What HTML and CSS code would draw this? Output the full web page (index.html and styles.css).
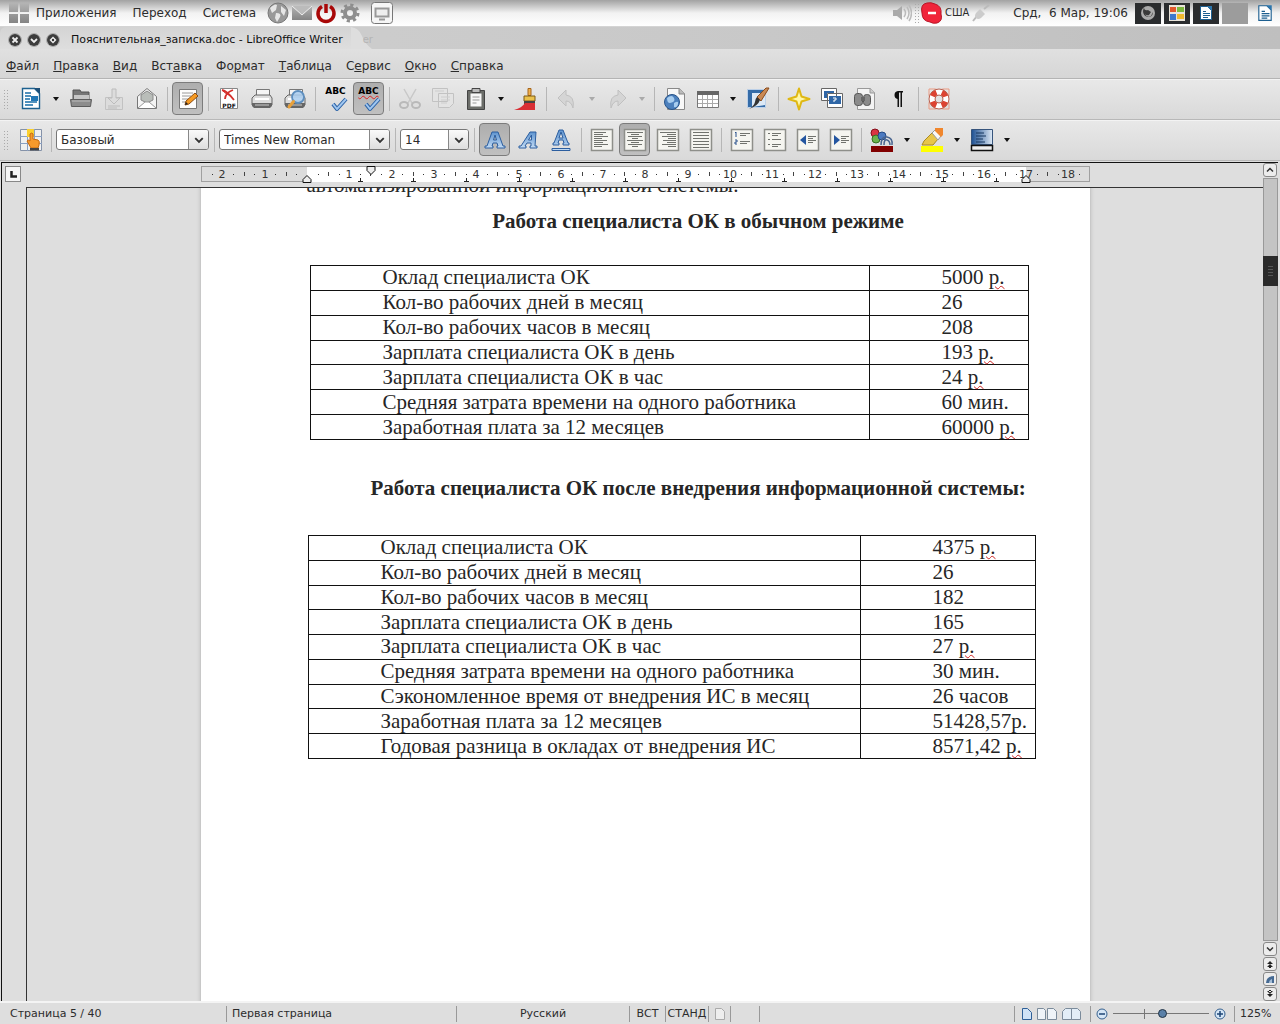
FILE: index.html
```html
<!DOCTYPE html>
<html lang="ru">
<head>
<meta charset="utf-8">
<title>Пояснительная_записка.doc - LibreOffice Writer</title>
<link rel="stylesheet" href="styles.css">
</head>
<body>
<svg class="defs" aria-hidden="true">
  <defs>
    <linearGradient id="blue" x1="0" y1="0" x2="0" y2="1"><stop offset="0" stop-color="#5d93cf"/><stop offset="1" stop-color="#c4dcf5"/></linearGradient>
    <linearGradient id="grey" x1="0" y1="0" x2="0" y2="1"><stop offset="0" stop-color="#b4b4b4"/><stop offset="1" stop-color="#848484"/></linearGradient>
    <linearGradient id="shade"><stop offset="0" stop-color="#1c4f91"/><stop offset="1" stop-color="#dfeaf6"/></linearGradient>
  </defs>
  <symbol id="doc" viewBox="0 0 24 24"><path d="M3.500 1.500h12l5 5v15h-17z" fill="#fff" stroke="#1d618f" stroke-width="1.400"/><path d="M15 1h6v6z" fill="#1d4f78"/><path d="M6 6h6M6 9h6M6 12h5M6 15h12M6 18h8" stroke="#176da8" stroke-width="1.500"/><path d="M12 9h7v5h-7z" fill="#2277b5"/></symbol>
  <symbol id="folder" viewBox="0 0 24 24"><path d="M4 3h7l1 2h8v8H4z" fill="#777" stroke="#555"/><path d="M5 8h15v5H5z" fill="#c6c6c6"/><path d="M1.500 12.500h21l-1 7h-19z" fill="#8c8c8c" stroke="#5c5c5c"/><path d="M3 14h18" stroke="#bbb"/></symbol>
  <symbol id="save" viewBox="0 0 24 24"><path d="M3.500 10.500h17v12h-17z" fill="#dcdcdc" stroke="#c2c2c2"/><path d="M10 2h4v9h4l-6 6-6-6h4z" fill="#dcdcdc" stroke="#bcbcbc"/><path d="M6 19h12M6 21h9" stroke="#bcbcbc"/></symbol>
  <symbol id="mail" viewBox="0 0 24 24"><path d="M2.500 9.500l9.500-8 9.500 8v12h-19z" fill="#f4f4f4" stroke="#777"/><path d="M6 8l6-4 6 4v5l-6 3-6-3z" fill="#b9bdb9" stroke="#888"/><path d="M3 21l7-6h4l7 6" fill="#fff" stroke="#999"/></symbol>
  <symbol id="edit" viewBox="0 0 24 24"><path d="M3.500 2.500h17v19h-17z" fill="#fdfdfd" stroke="#777"/><path d="M6 6h11M6 9h9M6 12h7M6 15h4" stroke="#9a9a9a"/><path d="M19 6l3 3-9 8-4 1 1-4z" fill="#f59a22" stroke="#8c4a10"/><path d="M9 18l1-3 2 2z" fill="#222"/></symbol>
  <symbol id="pdf" viewBox="0 0 24 24"><path d="M3.500 1.500h17v20h-17z" fill="#fff" stroke="#888"/><path d="M5 3q5 1 12 10M8 12q0-6 8-9" stroke="#d4302c" stroke-width="1.800" fill="none"/><path d="M5 3q2 3 7 5" stroke="#d4302c" fill="none"/><text x="12" y="20.500" class="pdf-label">PDF</text></symbol>
  <symbol id="print" viewBox="0 0 24 24"><path d="M6.500 10V2.500h13V10" fill="#f5f5f5" stroke="#777"/><path d="M2 11l3-3h15l2 3v7H2z" fill="#ddd" stroke="#666"/><path d="M5 12h14" stroke="#fff" stroke-width="2"/><path d="M2 16h20v3l-2 2H4l-2-2z" fill="#666"/><path d="M5 18h14" stroke="#ccc"/></symbol>
  <symbol id="lens" viewBox="0 0 24 24"><circle cx="15" cy="10" r="6" fill="#a9ccee" fill-opacity=".85" stroke="#5e8fbf" stroke-width="1.800"/><path d="M10.500 14.500L6 20" stroke="#e9a13b" stroke-width="3" stroke-linecap="round"/></symbol>
  <symbol id="tick" viewBox="0 0 24 24"><path d="M9 17l4 5 9-10" fill="none" stroke="#2c62a5" stroke-width="4" stroke-linejoin="round"/><path d="M9 17l4 5 9-10" fill="none" stroke="#9fc6f0" stroke-width="2"/></symbol>
  <symbol id="cut" viewBox="0 0 24 24"><path d="M6 2l8 14M18 2l-8 14" stroke="#c8c8c8" stroke-width="1.500"/><ellipse cx="6" cy="18" rx="4" ry="3" fill="none" stroke="#b9b9b9" stroke-width="2"/><ellipse cx="18" cy="18" rx="4" ry="3" fill="none" stroke="#b9b9b9" stroke-width="2"/></symbol>
  <symbol id="copy" viewBox="0 0 24 24"><path d="M1.500 1.500h15v13h-15zM7.500 6.500h15v10l-4 4h-11z" fill="#e3e3e3" stroke="#c2c2c2"/><path d="M4 4h9M10 10h9M10 13h9M10 16h6" stroke="#cdcdcd"/></symbol>
  <symbol id="paste" viewBox="0 0 24 24"><path d="M3.500 3.500h17v19h-17z" fill="#6b6d69" stroke="#444"/><path d="M6.500 6.500h11v13h-11z" fill="#f7f7f7"/><path d="M8 1.500h8v4H8z" fill="#bbb" stroke="#444"/><path d="M8.500 10h7M8.500 13h7M8.500 16h4" stroke="#999"/></symbol>
  <symbol id="brush" viewBox="0 0 24 24"><path d="M14 1.500h3v7h-3z" fill="#f0b04d" stroke="#a6651b"/><path d="M10 9h11v5H10z" fill="#eac14c" stroke="#7c5b16"/><path d="M10 14h11v3H10z" fill="#444"/><path d="M11 16h10v7H0q8-2 11-7z" fill="#d92f35"/></symbol>
  <symbol id="undo" viewBox="0 0 24 24"><path d="M11 3v5q9 1 7 13-2-7-7-7v5L3 11z" fill="#d5d5d5" stroke="#c0c0c0"/></symbol>
  <symbol id="globe" viewBox="0 0 24 24"><path d="M4.500 1.500h12l5 5v16h-17z" fill="#f8f8f8" stroke="#888"/><path d="M16 1v6h6" fill="#bbb" stroke="#888"/><circle cx="9" cy="15" r="7.500" fill="#4c80bd" stroke="#28548a"/><path d="M4 11q5-4 7 0t-4 5q-3 0-3-5zM11 16q5-3 4 1t-4 3z" fill="#a8cdef"/></symbol>
  <symbol id="table" viewBox="0 0 24 24"><path d="M1.500 4.500h21v16h-21z" fill="#fff" stroke="#777"/><path d="M1 4h22v4H1z" fill="#666"/><path d="M2 12.500h20M2 16.500h20M6.500 8v12M11.500 8v12M16.500 8v12" stroke="#aaa"/></symbol>
  <symbol id="draw" viewBox="0 0 24 24"><path d="M1.500 2.500h18v18h-18z" fill="#356ca8" stroke="#bcd0e8"/><path d="M6 6h13v12l-13 2z" fill="#dce9f6"/><path d="M23 1l-8 13-4-4L20 1z" fill="#c98954" stroke="#8a4c1c"/><path d="M14 13q-2 6-11 9 5-3 6-7 0-3 2-5z" fill="#333"/></symbol>
  <symbol id="star" viewBox="0 0 24 24"><path d="M12 1.500l2.500 8 8 2.500-8 2.500-2.500 8-2.500-8-8-2.500 8-2.500z" fill="#fff8a8" stroke="#dfb813" stroke-width="2" stroke-linejoin="round"/></symbol>
  <symbol id="gallery" viewBox="0 0 24 24"><path d="M1.500 1.500h15v12h-15zM7.500 6.500h15v14h-15z" fill="#fff" stroke="#666"/><path d="M4 4h10v2H7v5H4zM9 9h12v8H9z" fill="#2f66a6"/><path d="M13 11h3v2h-2v2" stroke="#fff" fill="none"/></symbol>
  <symbol id="find" viewBox="0 0 24 24"><path d="M4.500 1.500h13l4 4v17h-17z" fill="#f4f4f4" stroke="#999"/><path d="M17 1v5h5" fill="#ccc" stroke="#999"/><rect x="1.500" y="6.500" width="8" height="12" rx="3" fill="#8b8b8b" stroke="#555"/><rect x="10.500" y="7.500" width="7" height="11" rx="3" fill="#8b8b8b" stroke="#555"/><path d="M8 10h4v4H8z" fill="#666"/></symbol>
  <symbol id="pilcrow" viewBox="0 0 24 24"><path d="M12 4h5v1.500h-1V20h-1.500V5.500H13V20h-1.500v-8q-3-.5-3-4t3.500-4z" fill="#111"/></symbol>
  <symbol id="help" viewBox="0 0 24 24"><path d="M2 2h6l4 1 4-1h6v6l-1 4 1 4v6h-6l-4-1-4 1H2v-6l1-4-1-4z" fill="none" stroke="#eb9b83" stroke-width="1"/><circle cx="12" cy="12" r="7" fill="none" stroke="#fff" stroke-width="6"/><circle cx="12" cy="12" r="7" fill="none" stroke="#dd4331" stroke-width="6" stroke-dasharray="5.500 5.500" stroke-dashoffset="-2.700"/><circle cx="12" cy="12" r="10" fill="none" stroke="#b96150"/><circle cx="12" cy="12" r="4" fill="#e2e2e2" stroke="#b96150"/></symbol>
  <symbol id="hand" viewBox="0 0 24 24"><path d="M1.500 1.500h21v21h-21z" fill="#f0f0f0" stroke="#8592a8"/><path d="M1 8.500h22M1 15.500h22M8.500 1v22M15.500 1v22" stroke="#8aa0c2"/><path d="M8 1h7v8H8z" fill="#fbd02f"/><path d="M11 6q2-2 3 0v5l5 1q2 1 1 5l-1 3h-7l-4-7q1-2 3 0z" fill="#f69a2c" stroke="#c56a10"/><path d="M11 20h9v2.500h-9z" fill="#444"/></symbol>
  <symbol id="bold" viewBox="0 0 24 24"><path d="M2 20v-2h2L9 4h6l5 14h2v2h-8v-2h1l-1-3h-4l-1 3h1v2zM10.500 12h3L12 7z" fill="url(#blue)" stroke="#2c5e9f" fill-rule="evenodd"/></symbol>
  <symbol id="italic" viewBox="0 0 24 24"><path d="M3 20v-2h2L14 4h6l-1 14h2v2h-7v-2h1v-3h-4l-2 3h1v2zM12.500 12h3V7z" fill="url(#blue)" stroke="#2c5e9f" fill-rule="evenodd"/></symbol>
  <symbol id="under" viewBox="0 0 24 24"><path d="M4 17v-2h1L10 2h4l5 13h1v2h-6v-2h1l-1-3h-4l-1 3h1v2zM10 10h4l-2-6zM3 20.500h18v2H3z" fill="url(#blue)" stroke="#2c5e9f" fill-rule="evenodd"/></symbol>
  <symbol id="sheet" viewBox="0 0 24 24"><path d="M1.500 1.500h21v21h-21z" fill="#f5f5f0" stroke="#8e8f8a" stroke-width="1.500"/></symbol>
  <symbol id="color" viewBox="0 0 24 24"><path d="M1 18h22v6H1z" fill="#810000"/><circle cx="5" cy="5" r="4" fill="#d93443" stroke="#84101c"/><circle cx="6" cy="11" r="4" fill="#6cb44e" stroke="#36701f"/><circle cx="12" cy="8" r="4" fill="#4c7ac0" stroke="#234a86"/><path d="M11 17q0-9 6-8t5 8M14 17q0-6 3-5t3 5" fill="none" stroke="#49658f" stroke-width="1.500"/></symbol>
  <symbol id="mark" viewBox="0 0 24 24"><path d="M1 18h22v6H1z" fill="#ff0"/><path d="M4 13l8-8 6 6-5 6H2z" fill="#e8c64a" stroke="#ab8a20"/><path d="M12 5l3-3 6 6-3 4z" fill="#f8f8f8" stroke="#999"/><path d="M15 0h8v7l-2 2-6-6z" fill="#f0862d"/></symbol>
  <symbol id="back" viewBox="0 0 24 24"><path d="M1.500 1.500h21v15h-21z" fill="url(#shade)" stroke="#36547c"/><path d="M6 5h8M6 8h10M6 11h7M6 14h9" stroke="#16365f"/><path d="M1.500 17.500h21v5h-21z" fill="#eee" stroke="#111" stroke-width="1.500"/></symbol>
  <symbol id="drop" viewBox="0 0 8 8"><path d="M1 2h6L4 6z" fill="currentColor"/></symbol>
  <symbol id="chev" viewBox="0 0 8 8"><path d="M1 2.500l3 3 3-3" fill="none" stroke="#333" stroke-width="1.500"/></symbol>
  <symbol id="smalldoc" viewBox="0 0 16 16"><path d="M2.500 1.500h7l4 4v9h-11z" fill="#fff" stroke="#1d5f90"/><path d="M9 1h5v5z" fill="#2d76ac"/><path d="M5 6.500h3M5 8.500h7M5 10.500h7M5 12.500h5" stroke="#1d5f90"/></symbol>
</svg>

<header class="panel">
  <svg class="apps" viewBox="0 0 20 20"><path d="M0 0h9v9H0zM11 0h9v9h-9zM0 11h9v9H0zM11 11h9v9h-9z" fill="url(#grey)"/></svg>
  <nav class="panel-menu"><a href="#">Приложения</a><a href="#">Переход</a><a href="#">Система</a></nav>
  <div class="launchers">
    <svg viewBox="0 0 22 22"><circle cx="11" cy="11" r="10" fill="#999" stroke="#777"/><path d="M3 6q5-5 7-3l-1 5-4 3zM9 11q6 0 4 4l-3 5-2-4zM14 4l5 4-2 6-3-4z" fill="#e6e6e6"/></svg>
    <svg viewBox="0 0 22 22"><path d="M1 4h20v14H1z" fill="url(#grey)"/><path d="M1 4l10 9 10-9" fill="#bbb" stroke="#eee"/></svg>
    <svg viewBox="0 0 22 22"><path d="M7 4.500a8 8 0 1 0 8 0M11 2v9" fill="none" stroke="#a90808" stroke-width="3.500"/></svg>
    <svg viewBox="0 0 22 22"><circle cx="11" cy="11" r="5" fill="none" stroke="#8e8e8e" stroke-width="4"/><circle cx="11" cy="11" r="8" fill="none" stroke="#8e8e8e" stroke-width="3" stroke-dasharray="3.140 3.140"/></svg>
    <svg class="screen" viewBox="0 0 22 22"><rect x=".5" y=".5" width="21" height="21" rx="3" fill="#f6f6f6" stroke="#777"/><path d="M4.500 6.500h13v8h-13z" fill="#eee" stroke="#999" stroke-width="2"/><path d="M8 17.500h6" stroke="#999" stroke-width="2"/></svg>
  </div>
  <div class="tray">
    <svg class="i20" viewBox="0 0 20 20"><path d="M1 7h4l5-4v14l-5-4H1z" fill="#aaa"/><path d="M12 6q3 4 0 8M15 4q4 6 0 12M17 2q5 8 0 16" fill="none" stroke="#bbb" stroke-width="1.500"/></svg>
    <span class="grip"></span>
    <svg class="i22" viewBox="0 0 22 22"><path d="M6 1q4-1 8 1 7 2 6 10 2 7-4 9-4 1-7-1-8-1-8-9-2-9 5-10z" fill="#f0243a" stroke="#b71526"/><path d="M7 11h8" stroke="#fff" stroke-width="2.500"/></svg>
    <span class="lang">США</span>
    <svg class="i20" viewBox="0 0 20 20"><path d="M2 18l4-5M18 2l-5 4" stroke="#bbb" stroke-width="2"/><path d="M5 10l4-4 5 5-4 4q-3 2-5 0t0-5z" fill="#ccc"/></svg>
  </div>
  <time class="clock">Срд,&nbsp; 6 Мар, 19:06</time>
  <div class="windows">
    <button aria-label="Браузер"><svg viewBox="0 0 16 16"><circle cx="8" cy="8" r="7" fill="#aaa"/><path d="M4 2q0 4 4 3l3 2-2 3q-2 1-4-1 2 4 6 2l2-4q0 5-5 5-5-1-5-6z" fill="#3a3a3a"/></svg></button>
    <button aria-label="Файлы"><svg viewBox="0 0 16 16"><path d="M0 0h16v16H0z" fill="#e9e4da"/><path d="M1 2h6v5H1z" fill="#e2582c"/><path d="M8 2h7v5H8z" fill="#7cb83c"/><path d="M1 9h6v6H1z" fill="#3e78cc"/><path d="M8 9h7v5H8z" fill="#f0b92d"/></svg></button>
    <button aria-label="Документ"><svg viewBox="0 0 16 16"><use href="#smalldoc"/></svg></button>
    <button class="blank" aria-label="Пустое"></button>
  </div>
  <svg class="i18" viewBox="0 0 16 16"><use href="#smalldoc"/></svg>
</header>

<main class="window">
  <div class="titlebar">
    <div class="tab">
      <button aria-label="Закрыть"><svg viewBox="0 0 12 12"><circle cx="6" cy="6" r="6" fill="#3c3c3c"/><path d="M3.500 3.500l5 5M8.500 3.500l-5 5" stroke="#eee" stroke-width="1.800"/></svg></button>
      <button aria-label="Свернуть"><svg viewBox="0 0 12 12"><circle cx="6" cy="6" r="6" fill="#3c3c3c"/><path d="M3 5l3 3 3-3" fill="none" stroke="#eee" stroke-width="1.800"/></svg></button>
      <button aria-label="Развернуть"><svg viewBox="0 0 12 12"><circle cx="6" cy="6" r="6" fill="#3c3c3c"/><path d="M6 2.500L9.500 6 6 9.500 2.500 6z" fill="#eee"/><circle cx="6" cy="6" r="1.200" fill="#333"/></svg></button>
      <h1>Пояснительная_записка.doc - LibreOffice Writer</h1>
    </div>
    <svg class="tab-end" viewBox="0 0 24 22"><path d="M0 0q8 1 11 9t10 13H0z" fill="#dedede"/></svg>
    <span class="ghost">er</span>
  </div>
  <nav class="menubar">
    <a href="#"><u>Ф</u>айл</a><a href="#"><u>П</u>равка</a><a href="#"><u>В</u>ид</a><a href="#">Вст<u>а</u>вка</a><a href="#">Фо<u>р</u>мат</a><a href="#"><u>Т</u>аблица</a><a href="#">С<u>е</u>рвис</a><a href="#"><u>О</u>кно</a><a href="#"><u>С</u>правка</a>
  </nav>

  <div class="toolbar" role="toolbar" aria-label="Стандартная">
    <span class="grip"></span>
    <button aria-label="Создать"><svg><use href="#doc"/></svg></button>
    <button class="drop" aria-label="Виды документов"><svg><use href="#drop"/></svg></button>
    <button aria-label="Открыть"><svg><use href="#folder"/></svg></button>
    <button disabled aria-label="Сохранить"><svg><use href="#save"/></svg></button>
    <button aria-label="Отправить"><svg><use href="#mail"/></svg></button>
    <i class="sep"></i>
    <button class="on" aria-label="Правка файла"><svg><use href="#edit"/></svg></button>
    <i class="sep"></i>
    <button aria-label="Экспорт в PDF"><svg><use href="#pdf"/></svg></button>
    <button aria-label="Печать"><svg><use href="#print"/></svg></button>
    <button aria-label="Просмотр"><svg viewBox="0 0 24 24"><use href="#print"/><use href="#lens"/></svg></button>
    <i class="sep"></i>
    <button class="abc"><span>ABC</span><svg><use href="#tick"/></svg></button>
    <button class="abc wavy on"><span>ABC</span><svg><use href="#tick"/></svg></button>
    <i class="sep"></i>
    <button disabled aria-label="Вырезать"><svg><use href="#cut"/></svg></button>
    <button disabled aria-label="Копировать"><svg><use href="#copy"/></svg></button>
    <button aria-label="Вставить"><svg><use href="#paste"/></svg></button>
    <button class="drop" aria-label="Виды вставки"><svg><use href="#drop"/></svg></button>
    <button aria-label="Копировать формат"><svg><use href="#brush"/></svg></button>
    <i class="sep"></i>
    <button disabled aria-label="Отменить"><svg><use href="#undo"/></svg></button>
    <button class="drop" disabled aria-label="Список отмен"><svg><use href="#drop"/></svg></button>
    <button disabled aria-label="Повторить"><svg class="flip"><use href="#undo"/></svg></button>
    <button class="drop" disabled aria-label="Список повторов"><svg><use href="#drop"/></svg></button>
    <i class="sep"></i>
    <button aria-label="Гиперссылка"><svg><use href="#globe"/></svg></button>
    <button aria-label="Таблица"><svg><use href="#table"/></svg></button>
    <button class="drop" aria-label="Размер таблицы"><svg><use href="#drop"/></svg></button>
    <button aria-label="Рисование"><svg><use href="#draw"/></svg></button>
    <i class="sep"></i>
    <button aria-label="Навигатор"><svg><use href="#star"/></svg></button>
    <button aria-label="Галерея"><svg><use href="#gallery"/></svg></button>
    <button aria-label="Найти"><svg><use href="#find"/></svg></button>
    <button aria-label="Непечатаемые символы"><svg><use href="#pilcrow"/></svg></button>
    <i class="sep"></i>
    <button aria-label="Справка"><svg><use href="#help"/></svg></button>
  </div>

  <div class="toolbar" role="toolbar" aria-label="Форматирование">
    <span class="grip"></span>
    <button aria-label="Стили"><svg><use href="#hand"/></svg></button>
    <i class="sep"></i>
    <label class="combo style"><select aria-label="Стиль"><option>Базовый</option></select><span><svg><use href="#chev"/></svg></span></label>
    <i class="sep"></i>
    <label class="combo font"><select aria-label="Шрифт"><option>Times New Roman</option></select><span><svg><use href="#chev"/></svg></span></label>
    <i class="sep"></i>
    <label class="combo size"><select aria-label="Кегль"><option>14</option></select><span><svg><use href="#chev"/></svg></span></label>
    <i class="sep"></i>
    <button class="on" aria-label="Полужирный"><svg><use href="#bold"/></svg></button>
    <button aria-label="Курсив"><svg><use href="#italic"/></svg></button>
    <button aria-label="Подчёркнутый"><svg><use href="#under"/></svg></button>
    <i class="sep"></i>
    <button aria-label="По левому краю"><svg viewBox="0 0 24 24"><use href="#sheet"/><path class="ln" d="M4 4.500h12M4 6.500h9M4 8.500h14M4 10.500h8M4 12.500h13M4 14.500h9M4 16.500h14M4 18.500h8"/></svg></button>
    <button class="on" aria-label="По центру"><svg viewBox="0 0 24 24"><use href="#sheet"/><path class="ln" d="M4 4.500h16M8 6.500h8M5 8.500h14M9 10.500h6M4 12.500h16M8 14.500h8M5 16.500h14M9 18.500h6"/></svg></button>
    <button aria-label="По правому краю"><svg viewBox="0 0 24 24"><use href="#sheet"/><path class="ln" d="M4 4.500h16M11 6.500h9M6 8.500h14M12 10.500h8M7 12.500h13M11 14.500h9M6 16.500h14M12 18.500h8"/></svg></button>
    <button aria-label="По ширине"><svg viewBox="0 0 24 24"><use href="#sheet"/><path class="ln" d="M4 4.500h16M4 7.500h16M4 10.500h16M4 13.500h16M4 16.500h16M4 19.500h16"/></svg></button>
    <i class="sep"></i>
    <button aria-label="Нумерация"><svg viewBox="0 0 24 24"><use href="#sheet"/><path class="ln" d="M10 5.500h10M10 7.500h6M10 13.500h10M10 15.500h7"/><path d="M5 5l1-1v5M5 12h2v2H5v2h2" stroke="#28518c" fill="none"/></svg></button>
    <button aria-label="Маркеры"><svg viewBox="0 0 24 24"><use href="#sheet"/><path class="ln" d="M5 5.500h2M9 5.500h9M9 7.500h6M5 11.500h2M9 11.500h9M5 16.500h2M9 16.500h9M9 18.500h6"/></svg></button>
    <button aria-label="Уменьшить отступ"><svg viewBox="0 0 24 24"><use href="#sheet"/><path d="M10 7v10l-6-5z" fill="#2456a0"/><path class="ln" d="M12 8.500h8M12 10.500h5M12 12.500h8M12 14.500h5"/></svg></button>
    <button aria-label="Увеличить отступ"><svg viewBox="0 0 24 24"><use href="#sheet"/><path d="M5 7v10l6-5z" fill="#2456a0"/><path class="ln" d="M12 8.500h8M12 10.500h5M12 12.500h8M12 14.500h5"/></svg></button>
    <i class="sep"></i>
    <button aria-label="Цвет шрифта"><svg><use href="#color"/></svg></button>
    <button class="drop" aria-label="Палитра шрифта"><svg><use href="#drop"/></svg></button>
    <button aria-label="Выделение цветом"><svg><use href="#mark"/></svg></button>
    <button class="drop" aria-label="Палитра выделения"><svg><use href="#drop"/></svg></button>
    <button aria-label="Фон абзаца"><svg><use href="#back"/></svg></button>
    <button class="drop" aria-label="Палитра фона"><svg><use href="#drop"/></svg></button>
  </div>

  <section class="editor">
    <div class="canvas">
      <div class="rulerbar">
        <button class="tabstop" aria-label="Табуляция"><svg viewBox="0 0 14 14"><path d="M5.500 4v5.500H11" fill="none" stroke="#222" stroke-width="2.500"/></svg></button>
        <svg class="ruler" viewBox="0 0 889 22"></svg>
      </div>
      <div class="desk">
        <article class="page">
          <p>автоматизированной информационной системы:</p>
          <h2>Работа специалиста ОК в обычном режиме</h2>
          <table class="before">
            <tr><td>Оклад специалиста ОК</td><td>5000 <s>р.</s></td></tr>
            <tr><td>Кол-во рабочих дней в месяц</td><td>26</td></tr>
            <tr><td>Кол-во рабочих часов в месяц</td><td>208</td></tr>
            <tr><td>Зарплата специалиста ОК в день</td><td>193 <s>р.</s></td></tr>
            <tr><td>Зарплата специалиста ОК в час</td><td>24 <s>р.</s></td></tr>
            <tr><td>Средняя затрата времени на одного работника</td><td>60 мин.</td></tr>
            <tr><td>Заработная плата за 12 месяцев</td><td>60000 <s>р.</s></td></tr>
          </table>
          <h2>Работа специалиста ОК после внедрения информационной системы:</h2>
          <table class="after">
            <tr><td>Оклад специалиста ОК</td><td>4375 <s>р.</s></td></tr>
            <tr><td>Кол-во рабочих дней в месяц</td><td>26</td></tr>
            <tr><td>Кол-во рабочих часов в месяц</td><td>182</td></tr>
            <tr><td>Зарплата специалиста ОК в день</td><td>165</td></tr>
            <tr><td>Зарплата специалиста ОК в час</td><td>27 <s>р.</s></td></tr>
            <tr><td>Средняя затрата времени на одного работника</td><td>30 мин.</td></tr>
            <tr><td>Сэкономленное время от внедрения ИС в месяц</td><td>26 часов</td></tr>
            <tr><td>Заработная плата за 12 месяцев</td><td>51428,57р.</td></tr>
            <tr><td>Годовая разница в окладах от внедрения ИС</td><td>8571,42 <s>р.</s></td></tr>
          </table>
        </article>
      </div>
    </div>
    <div class="scroll">
      <button aria-label="Вверх"><svg viewBox="0 0 8 8"><path d="M1 5.500l3-3 3 3" fill="none" stroke="#333" stroke-width="1.500"/></svg></button>
      <div class="track"><div class="thumb"></div></div>
      <button aria-label="Вниз"><svg><use href="#chev"/></svg></button>
      <button aria-label="Предыдущая страница"><svg viewBox="0 0 8 8"><path d="M1 4l3-3 3 3zM1 7l3-3 3 3zM3 6h2v2H3z" fill="#222"/></svg></button>
      <button aria-label="Навигация"><svg viewBox="0 0 8 8"><path d="M0 8q0-7 8-7v7z" fill="#456a93"/><path d="M3 8q0-3 3-4v4z" fill="#a5bdd6"/></svg></button>
      <button aria-label="Следующая страница"><svg viewBox="0 0 8 8"><path d="M1 1l3 3 3-3zM1 4l3 3 3-3zM3 0h2v2H3z" fill="#222"/></svg></button>
    </div>
  </section>

  <footer class="status">
    <span>Страница 5 / 40</span>
    <span class="tight">Первая страница</span>
    <span class="mid">Русский</span>
    <span class="mid">ВСТ</span>
    <span class="mid">СТАНД</span>
    <span class="mid"><svg class="i12" viewBox="0 0 12 12"><path d="M1.500.500h6l3 3v8h-9z" fill="#eee" stroke="#aaa"/></svg></span>
    <span></span>
    <span></span>
    <span class="views">
      <svg class="v1" viewBox="0 0 10 12"><path d="M.5.5h5l4 4v7h-9z" fill="#cfe2f6" stroke="#2e5f97"/></svg>
      <svg class="v2" viewBox="0 0 20 12"><path d="M.5.500h6l2 2v9h-8zM10.500.500h6l3 3v8h-9z" fill="#eef3f8" stroke="#7b8b9b"/></svg>
      <svg class="v2" viewBox="0 0 20 12"><path d="M.5 3.500l3-3h6v11h-9zM9.500.500h6l3 3v8h-9z" fill="#e2edf7" stroke="#7b8b9b"/></svg>
    </span>
    <span class="zoom">
      <svg class="i12" viewBox="0 0 12 12"><circle cx="6" cy="6" r="5" fill="#d5e6f6" stroke="#37618f"/><path d="M3 6h6" stroke="#1d4575" stroke-width="1.500"/></svg>
      <input type="range" min="0" max="100" value="52" aria-label="Масштаб">
      <svg class="i12" viewBox="0 0 12 12"><circle cx="6" cy="6" r="5" fill="#d5e6f6" stroke="#37618f"/><path d="M3 6h6M6 3v6" stroke="#1d4575" stroke-width="1.500"/></svg>
    </span>
    <span class="tight">125%</span>
  </footer>
</main>
<script src="ruler.js"></script>
</body>
</html>
```
FILE: ruler.js
```js
// Draws the centimetre ruler: numbers, half and quarter marks, tab stops.
const ruler = document.querySelector('.ruler');
const CM = 42.3, ZERO = 106, END = 825;
let out = '<rect x="0.5" y="3.500" width="888" height="15" fill="#dcdcdc" stroke="#a0a0a0"/>' +
  `<rect x="${ZERO}" y="4" width="${END - ZERO}" height="15" fill="#fff"/>`;
for (let q = -9; q <= 73; q++) {
  const x = Math.round(ZERO + q * CM / 4);
  if (q % 4 === 0) {
    if (q) out += `<text x="${x}" y="15">${Math.abs(q / 4)}</text>`;
  } else if (q % 2 === 0) {
    out += `<path d="M${x + 0.5} 9v4" stroke="#444"/>`;
  } else {
    out += `<path d="M${x} 11.500h1" stroke="#333"/>`;
  }
}
for (let k = 1; k < 14; k++) {
  out += `<path d="M${ZERO + k * 53 + 0.5} 15v4m-2.500 -0.500h5" stroke="#222" fill="none"/>`;
}
out += `<path d="M${ZERO + 60} 3.500h8v4l-4 4-4-4z" fill="#eee" stroke="#111"/>`;
for (const x of [ZERO, END]) {
  out += `<path d="M${x - 4} 19.500h8v-3l-4-4-4 4z" fill="#eee" stroke="#111"/>`;
}
ruler.innerHTML = out;
```
FILE: styles.css
```css
* { box-sizing: border-box; }
body {
  margin: 0;
  height: 100vh;
  display: flex;
  flex-direction: column;
  overflow: hidden;
  background: #dedede;
  color: #2c2c2c;
  font: 12px/16px "DejaVu Sans", sans-serif;
}
a { color: inherit; text-decoration: none; }
button { margin: 0; padding: 0; border: 0; background: none; color: inherit; font: inherit; }
svg { display: block; flex: none; }
.defs { position: absolute; width: 0; height: 0; }
.i12 { width: 12px; height: 12px; }
.i18 { width: 18px; height: 18px; }
.i20 { width: 20px; height: 20px; }
.i22 { width: 22px; height: 22px; }
.grip {
  flex: none;
  width: 5px;
  height: 20px;
  background: radial-gradient(circle, #aaa 1px, transparent 1px) 0 0 / 3px 3px;
}
.pdf-label { font: 700 6px "DejaVu Sans", sans-serif; text-anchor: middle; fill: #111; }

.panel {
  flex: none;
  height: 26px;
  display: flex;
  align-items: center;
  padding: 0 6px 0 9px;
  background: linear-gradient(#a2a2a2, #f2f2f2 50%, #fff);
}
.apps { width: 20px; height: 20px; }
.panel-menu { display: flex; gap: 16px; margin-left: 7px; }
.launchers { display: flex; gap: 2px; margin-left: 11px; align-items: center; }
.launchers svg { width: 22px; height: 22px; }
.launchers .screen { margin-left: 8px; }
.tray { display: flex; align-items: center; gap: 2px; margin-left: auto; }
.lang { font-family: "DejaVu Sans Condensed", "DejaVu Sans", sans-serif; font-size: 11px; }
.clock { margin: 0 7px 0 22px; }
.windows { display: flex; gap: 3px; margin-right: 8px; }
.windows button { width: 26px; height: 21px; display: grid; place-items: center; background: #2a2c2e; }
.windows .blank { background: #9c9c9c; }
.windows svg { width: 16px; height: 16px; }

.window { flex: 1; min-height: 0; display: flex; flex-direction: column; }
.titlebar { flex: none; height: 23px; display: flex; background: linear-gradient(90deg, #ccc 30%, #c8c8c8 60%, #bfbfbf); border-top: 1px solid #d4d4d4; }
.tab { display: flex; align-items: center; gap: 5px; padding: 4px 8px 0; background: linear-gradient(#d4d4d4, #dedede); border-top-left-radius: 6px; }
.tab button { width: 14px; height: 14px; border: 1px solid #aaa; border-radius: 7px; }
.tab h1 { margin: 0 0 0 6px; font-size: 11px; font-weight: 400; color: #111; }
.tab-end { width: 24px; height: 22px; }
.ghost { margin-left: -12px; padding-top: 5px; font-size: 10px; color: #b4b4b4; }
.menubar { flex: none; height: 30px; display: flex; align-items: center; gap: 14px; padding: 4px 6px 0; background: linear-gradient(#e0e0e0, #d6d6d6); border-bottom: 1px solid #b4b4b4; }

.toolbar { flex: none; height: 41px; display: flex; align-items: center; gap: 2px; padding: 0 3px 2px; background: linear-gradient(#e8e8e8, #d9d9d9); border-top: 1px solid #f3f3f3; border-bottom: 1px solid #b8b8b8; }
.toolbar .grip { margin-right: 5px; }
.toolbar button { flex: none; width: 31px; height: 33px; display: grid; place-items: center; border: 1px solid transparent; border-radius: 4px; }
.toolbar button svg { width: 24px; height: 24px; }
.toolbar .on { background: linear-gradient(#aeaeae, #c0c0c0); border-color: #7c7c7c; }
.toolbar .drop { width: 15px; }
.toolbar .drop svg { width: 8px; height: 8px; color: #111; }
.toolbar .drop:disabled svg { color: #aaa; }
.toolbar .flip { transform: scaleX(-1); }
.toolbar .sep { flex: none; width: 6px; height: 24px; background: linear-gradient(#b6b6b6, #b6b6b6) 3px 0 / 1px 100% no-repeat; }
.abc span, .abc svg { grid-area: 1 / 1; }
.abc span { align-self: start; margin-top: 2px; font-weight: 700; font-size: 9px; line-height: 12px; color: #000; }
.wavy span { text-decoration: underline wavy #d22 1px; }
.ln { stroke: #71736e; fill: none; }

.combo { position: relative; flex: none; height: 21px; display: flex; border: 1px solid #777; border-radius: 3px; background: #fff; overflow: hidden; }
.combo select { flex: 1; appearance: none; border: 0; padding: 0 4px; background: none; color: #2c2c2c; font: inherit; }
.combo span { position: absolute; right: 0; top: 0; width: 20px; height: 19px; display: grid; place-items: center; border-left: 1px solid #888; background: linear-gradient(#fafafa, #dedede); pointer-events: none; }
.combo svg { width: 10px; height: 10px; }
.style { width: 153px; }
.font { width: 171px; }
.size { width: 69px; }

.editor { flex: 1; min-height: 0; display: flex; margin: 1px 2px 0 1px; border-top: 1px solid #111; border-left: 1px solid #111; }
.canvas { flex: 1; min-width: 0; display: flex; flex-direction: column; }
.rulerbar { flex: none; height: 24px; display: grid; grid-template-columns: 25px 1fr; align-items: start; }
.tabstop { width: 16px; height: 16px; margin: 3px 0 0 3px; border: 1px solid #888; background: #f6f6f6; }
.tabstop svg { width: 14px; height: 14px; }
.ruler { width: 889px; height: 22px; justify-self: center; }
.ruler text { font: 11px "DejaVu Sans", sans-serif; text-anchor: middle; fill: #333; }
.desk { flex: 1; min-height: 0; margin-left: 24px; overflow: hidden; border-top: 1px solid #333; border-left: 1px solid #333; background: #dedede; }
.page {
  width: 889px;
  min-height: 1100px;
  margin: -15px auto 0;
  padding: 0 64px 0 106px;
  background: #fff;
  box-shadow: 0 0 4px #aaa;
  font: 21px/24px "Liberation Serif", serif;
  color: #262626;
}
.page p { margin: 0; }
.page h2 { margin: 0; padding: 12px 0 32px; font-size: 21px; line-height: 24px; text-align: center; text-indent: 64px; white-space: nowrap; }
.page table { border-collapse: collapse; table-layout: fixed; }
.page td { height: 24px; padding: 0 0 0 72px; border: 1px solid #111; line-height: 23px; white-space: nowrap; }
.page s { text-decoration: underline wavy #c22 1px; }
.before { width: 719px; height: 175px; margin: 0 0 24px 3px; }
.before td:first-child { width: 559px; }
.after { width: 728px; height: 224px; margin: 3px 0 0 1px; }
.after td:first-child { width: 552px; }

.scroll { flex: none; width: 15px; display: flex; flex-direction: column; gap: 1px; background: #dedede; }
.scroll button { flex: none; width: 14px; height: 14px; display: grid; place-items: center; border: 1px solid #888; border-radius: 3px; background: #ececec; }
.scroll button svg { width: 8px; height: 8px; }
.track { flex: 1; padding-top: 77px; border: 1px solid #999; background: #c4c4c4; }
.thumb { height: 30px; margin: 0 -1px; background: repeating-linear-gradient(#555 0 1px, #2a2a2a 1px 3px) center / 5px 10px no-repeat #2a2a2a; }

.status { flex: none; height: 23px; display: grid; grid-template-columns: 227px 230px 173px 36px 43px 22px 29px 1fr 76px 144px 45px; align-items: center; border-top: 2px solid #f4f4f4; font-size: 11px; }
.status > span { height: 16px; padding-left: 10px; border-right: 1px solid #999; white-space: nowrap; }
.status > .tight { padding-left: 5px; }
.status > :last-child { border: 0; }
.status > .mid { padding: 0; display: grid; place-items: center; }
.status > .views { display: flex; align-items: center; gap: 5px; padding-left: 7px; }
.v1 { width: 10px; height: 12px; }
.v2 { width: 20px; height: 12px; }
.status > .zoom { display: flex; align-items: center; gap: 5px; padding: 0 8px 0 5px; }
.zoom input { flex: 1; min-width: 0; height: 12px; margin: 0; appearance: none; background: linear-gradient(#777, #777) center / 100% 1px no-repeat, linear-gradient(#777, #777) 33% 50% / 1px 10px no-repeat; }
.zoom input::-webkit-slider-thumb { appearance: none; width: 9px; height: 9px; border: 1px solid #234; border-radius: 5px; background: #5a80a8; }
```
